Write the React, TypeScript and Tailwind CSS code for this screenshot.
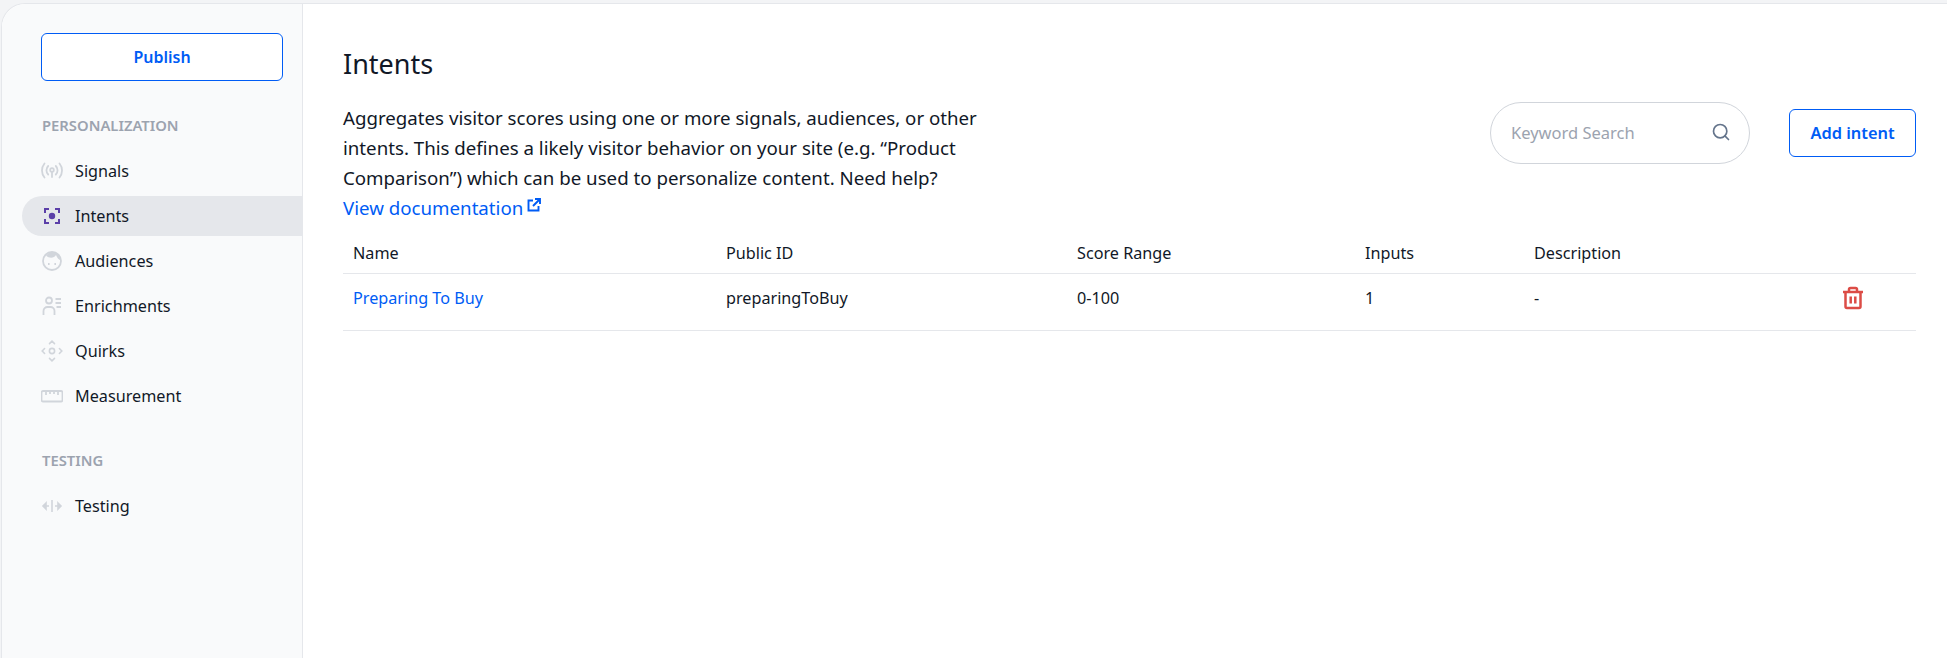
import { Search } from "lucide-react";
import type { ReactNode } from "react";

const iconClass = "w-[22px] h-[22px] text-[#d1d5db]";

function SignalsIcon() {
  return (
    <svg viewBox="0 0 22 22" fill="none" stroke="currentColor" strokeWidth="1.8" strokeLinecap="round" className={iconClass}>
      <circle cx="11" cy="10" r="1.8" />
      <path d="M11 12v5" />
      <path d="M7.200 6a6 6 0 0 0 0 8.500M14.800 6a6 6 0 0 1 0 8.500" />
      <path d="M3.500 3.500a11 11 0 0 0 0 14M18.500 3.500a11 11 0 0 1 0 14" />
    </svg>
  );
}

function IntentsIcon() {
  return (
    <svg viewBox="0 0 22 22" fill="none" stroke="#5b3fa8" strokeWidth="2" className="w-[22px] h-[22px]">
      <path d="M8 4H4v4M14 4h4v4M8 18H4v-4M14 18h4v-4" />
      <circle cx="11" cy="11" r="3.200" fill="#5b3fa8" stroke="none" />
    </svg>
  );
}

function AudiencesIcon() {
  return (
    <svg viewBox="0 0 22 22" fill="none" stroke="currentColor" strokeWidth="1.800" className={iconClass}>
      <circle cx="11" cy="11" r="9" />
      <path d="M5 5.500c3 3 8 3 10-.5 1 3 3 5 5 5.500L18 5l-5-3H9z" fill="currentColor" stroke="none" />
      <path d="M7 14h1.600M13.400 14H15" />
    </svg>
  );
}

function EnrichmentsIcon() {
  return (
    <svg viewBox="0 0 22 22" fill="none" stroke="currentColor" strokeWidth="1.800" className={iconClass}>
      <circle cx="8" cy="5.500" r="3" />
      <path d="M2.500 20v-4a4 4 0 0 1 4-4h3a4 4 0 0 1 4 4v4" />
      <path d="M14.500 4H20M14.500 8H20M15.500 12H20" />
    </svg>
  );
}

function QuirksIcon() {
  return (
    <svg viewBox="0 0 22 22" fill="none" stroke="currentColor" strokeWidth="1.600" strokeLinecap="round" className={iconClass}>
      <circle cx="11" cy="11" r="2.600" />
      <path d="M8.500 3.600 11 1.200l2.500 2.400M8.500 18.400l2.500 2.400 2.500-2.400M3.600 8.500 1.200 11l2.400 2.500M18.400 8.500l2.400 2.500-2.400 2.500" />
    </svg>
  );
}

function MeasurementIcon() {
  return (
    <svg viewBox="0 0 22 22" fill="none" stroke="currentColor" strokeWidth="1.800" className={iconClass}>
      <rect x="0.500" y="6" width="21" height="10.500" rx="1.500" />
      <path d="M5 6v4M9 6v3M13 6v3M17 6v4" />
    </svg>
  );
}

function TestingIcon() {
  return (
    <svg viewBox="0 0 22 22" fill="none" stroke="currentColor" strokeWidth="1.600" className={iconClass}>
      <path d="M11 5v12M2 11h6M14 11h6" />
      <path d="M5 8l-3 3 3 3zM17 8l3 3-3 3z" fill="currentColor" />
    </svg>
  );
}

function TrashIcon() {
  return (
    <svg viewBox="0 0 24 24" fill="none" stroke="#dc4c46" strokeWidth="2.500" className="w-[24px] h-[24px] -ml-[1px]">
      <path d="M2 6h20" />
      <path d="M8 6V3.500A1.500 1.500 0 0 1 9.500 2h5A1.500 1.500 0 0 1 16 3.500V6" />
      <path d="M4.500 6v14.500A1.500 1.500 0 0 0 6 22h12a1.500 1.500 0 0 0 1.500-1.500V6" />
      <path d="M9.700 10.500v7M14.300 10.500v7" />
    </svg>
  );
}

function ExternalIcon() {
  return (
    <svg viewBox="0 0 14 14" fill="none" stroke="currentColor" strokeWidth="1.900" className="w-[14px] h-[14px]">
      <path d="M6 2.500H1.500v10h10V8" />
      <path d="M8 1h5v5M13 1 6 8" />
    </svg>
  );
}

function NavItem({ icon, label, active }: { icon: ReactNode; label: string; active?: boolean }) {
  return (
    <div className={`h-[40px] mb-[5px] flex items-center pl-[20px] rounded-l-[20px] ${active ? "bg-[#e5e7eb]" : ""}`}>
      <span className="w-[33px] flex items-center justify-start -ml-[1px]">{icon}</span>
      <span className="text-[16.2px] text-[#111827] ml-[1px]">{label}</span>
    </div>
  );
}

function SectionLabel({ children }: { children: ReactNode }) {
  return (
    <div className="pl-[20px] text-[14.8px] leading-[20px] font-semibold text-[#9ca3af]">{children}</div>
  );
}

const GRID = "grid grid-cols-[373px_351px_288px_169px_1fr_74px] items-center";

export default function App() {
  return (
    <div className="h-[658px] w-full overflow-hidden bg-[#f3f4f6] pt-[3px] font-['Noto_Sans','Open_Sans',sans-serif]">
      <div className="flex h-[655px] bg-white rounded-tl-[24px] border-t border-l border-[#e5e7eb] ml-[1px]">
        <aside className="w-[301px] shrink-0 bg-[#f9fafb] border-r border-[#e5e7eb] rounded-tl-[24px] pt-[29px] pl-[20px]">
          <div className="pl-[19px] pr-[19px]">
            <button type="button" className="w-[242px] h-[48px] bg-white border border-[#005cf5] rounded-[6px] text-[16px] font-semibold text-[#005cf5]">
              Publish
            </button>
          </div>
          <div className="mt-[34px]">
            <SectionLabel>PERSONALIZATION</SectionLabel>
          </div>
          <div className="mt-[16px]">
            <NavItem icon={<SignalsIcon />} label="Signals" />
            <NavItem icon={<IntentsIcon />} label="Intents" active />
            <NavItem icon={<AudiencesIcon />} label="Audiences" />
            <NavItem icon={<EnrichmentsIcon />} label="Enrichments" />
            <NavItem icon={<QuirksIcon />} label="Quirks" />
            <NavItem icon={<MeasurementIcon />} label="Measurement" />
          </div>
          <div className="mt-[34px]">
            <SectionLabel>TESTING</SectionLabel>
          </div>
          <div className="mt-[16px]">
            <NavItem icon={<TestingIcon />} label="Testing" />
          </div>
        </aside>
        <main className="flex-1 pl-[40px] pr-[31px] pt-[44px]">
          <h1 className="text-[27px] leading-[32px] text-[#111827]">Intents</h1>
          <div className="flex justify-between mt-[23px]">
            <p className="w-[660px] text-[18.7px] leading-[30px] text-[#111827]">
              Aggregates visitor scores using one or more signals, audiences, or other intents. This defines a likely visitor behavior on your site (e.g. “Product Comparison”) which can be used to personalize content. Need help?{" "}
              <a className="inline-flex items-start gap-[4px] text-[#005cf5]">
                View documentation
                <span className="mt-[5px]"><ExternalIcon /></span>
              </a>
            </p>
            <div className="flex items-start mt-[6px]">
              <div className="w-[260px] h-[62px] -mt-[7px] rounded-full border border-[#d1d5db] flex items-center justify-between pl-[20px] pr-[18px]">
                <span className="text-[16.5px] text-[#9ca3af]">Keyword Search</span>
                <Search size={20} className="text-[#64748b] -mt-[2px]" />
              </div>
              <button type="button" className="ml-[39px] w-[127px] h-[48px] bg-white border border-[#005cf5] rounded-[6px] text-[16.4px] font-semibold text-[#005cf5]">
                Add intent
              </button>
            </div>
          </div>
          <div className="mt-[7px]">
            <div className={`${GRID} h-[44px] pt-[4px] border-b border-[#e5e7eb] pl-[10px] text-[16.2px] text-[#111827]`}>
              <div>Name</div>
              <div>Public ID</div>
              <div>Score Range</div>
              <div>Inputs</div>
              <div>Description</div>
              <div />
            </div>
            <div className={`${GRID} h-[57px] pb-[8px] border-b border-[#e5e7eb] pl-[10px] text-[16.2px] text-[#111827]`}>
              <a className="text-[#005cf5]">Preparing To Buy</a>
              <div>preparingToBuy</div>
              <div>0-100</div>
              <div>1</div>
              <div>-</div>
              <TrashIcon />
            </div>
          </div>
        </main>
      </div>
    </div>
  );
}
